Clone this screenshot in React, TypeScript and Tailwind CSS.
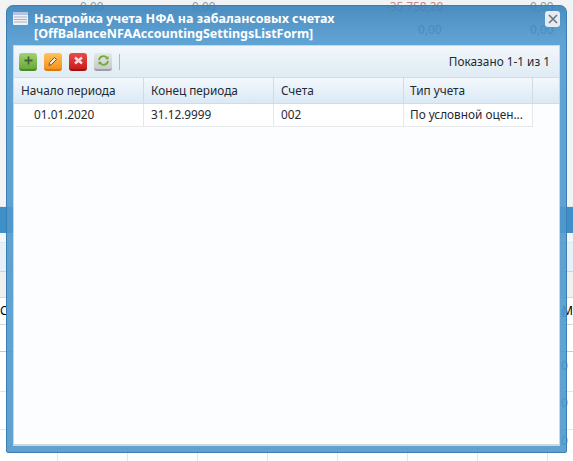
import React from "react";

const font = { fontFamily: '"Noto Sans", "Liberation Sans", sans-serif' };

function Btn({ from, to, edge, children }: { from: string; to: string; edge: string; children: React.ReactNode }) {
  return (
    <div
      className="w-[18px] h-[18px] rounded-[3px] flex items-center justify-center border-b-2"
      style={{ background: `linear-gradient(${from}, ${to})`, borderBottomColor: edge }}
    >
      {children}
    </div>
  );
}

const cols = [
  { w: "w-[128px]", ph: "pl-[5px]", h: "Начало периода", v: "01.01.2020", pv: "pl-[18px]" },
  { w: "w-[130px]", ph: "pl-[7px]", h: "Конец периода", v: "31.12.9999", pv: "pl-[7px]" },
  { w: "w-[130px]", ph: "pl-[7px]", h: "Счета", v: "002", pv: "pl-[7px]" },
  { w: "w-[129px]", ph: "pl-[6px]", h: "Тип учета", v: "По условной оцен...", pv: "pl-[6px]" },
];

const bgRows = [
  { h: "h-[207px]", c: "bg-[#f1f3f5] border-[#e3e6e9]", t: "" },
  { h: "h-[26px]", c: "bg-[#3f8fc9] border-[#3f8fc9]", t: "" },
  { h: "h-[10px]", c: "bg-[#f4f7fa] border-[#dfe6ec]", t: "" },
  { h: "h-[29px]", c: "bg-[#e6f0f8] border-[#c9d3dc]", t: "" },
  { h: "h-[26px]", c: "bg-[#f0f0f1] border-[#d5d8db]", t: "" },
  { h: "h-[27px]", c: "bg-white border-[#d5d8db]", t: "C" },
  { h: "h-[27px]", c: "bg-white border-[#c8c8c8]", t: "" },
  { h: "h-[40px]", c: "bg-white border-[#e3e6e9]", t: "" },
  { h: "h-[38px]", c: "bg-white border-[#e3e6e9]", t: "" },
];

const ticks = ["w-[58px]", "w-[70px]", "w-[70px]", "w-[70px]", "w-[70px]", "w-[70px]", "w-[70px]", "w-[70px]"];

export default function App() {
  return (
    <div className="relative w-[573px] h-[461px] overflow-hidden bg-white text-[11.8px] text-[#1f2a33]" style={font}>
      <div className="flex flex-col">
        {bgRows.map((r, i) => (
          <div key={i} className={`${r.h} ${r.c} border-b flex justify-between items-center text-black`}>
            <span>{r.t}</span>
            <span>{r.t ? "М" : ""}</span>
          </div>
        ))}
        <div className="h-[31px] flex bg-white">
          {ticks.map((w, i) => (
            <div key={i} className={`${w} shrink-0 border-r border-[#e3e6e9]`} />
          ))}
        </div>
      </div>
      <div className="absolute left-[80px] top-[-2px] flex text-[#8f989f]">
        <span className="w-[112px]">0,00</span>
        <span className="w-[194px]">0,00</span>
        <span className="w-[144px] text-[#bd8a8a]">-35 758,20</span>
        <span>0,00</span>
      </div>
      <div className="absolute left-[418px] top-[21px] flex text-[#17588c]">
        <span className="w-[112px]">0,00</span>
        <span>0,00</span>
      </div>
      <div className="absolute left-[561px] top-[304px] flex flex-col text-[#17588c] leading-[16px]">
        <span>0</span>
        <span className="mt-[37px]">0</span>
        <span className="mt-[21px]">0</span>
        <span className="mt-[22px]">0</span>
      </div>
      {/* Window */}
      <div className="absolute left-[6px] top-[5px] w-[561px] h-[448px] rounded-t-[7px] rounded-b-[2px] bg-gradient-to-b from-[#3a82ba]/90 from-[0%] via-[#4f9ad0]/90 via-[8%] to-[#4f97cb]/90 border border-[#3a7fb3] px-[6px] pb-[6px] flex flex-col">
        <div className="h-[39px] flex items-start shrink-0 relative">
          <svg width="15" height="13" viewBox="0 0 15 13" className="mt-[6px] shrink-0">
            <rect x="0" y="0" width="15" height="13" rx="1" fill="#eef1f5" />
            <rect x="0" y="0" width="15" height="3" fill="#b4c2e4" />
            <path d="M1 5h13M1 7.5h13M1 10h13" stroke="#a9b1c0" strokeWidth="1" />
          </svg>
          <div className="ml-[6px] mt-[5px] text-[12.5px] leading-[15px] font-bold text-white whitespace-nowrap">
            <div>Настройка учета НФА на забалансовых счетах</div>
            <div>[OffBalanceNFAAccountingSettingsListForm]</div>
          </div>
          <div className="absolute right-[0px] top-[5px] w-[15px] h-[16px] rounded-[3px] bg-[#e6ecf1] flex items-center justify-center">
            <svg width="10" height="10" viewBox="0 0 10 10">
              <path d="M1 1l8 8M9 1l-8 8" stroke="#6a757f" strokeWidth="1.6" />
            </svg>
          </div>
        </div>
        <div className="flex-1 flex flex-col bg-[#fbfdff] border border-[#cfd6dc] border-b-2 min-h-0">
          <div className="h-[32px] shrink-0 flex items-center pl-[5px] pr-[9px] bg-gradient-to-b from-[#f2f7fb] to-[#dfebf4] border-b border-[#cfdce6]">
            <div className="flex items-center gap-[7px]">
              <Btn from="#a2d36c" to="#6aa83c" edge="#4c8a28">
                <svg width="11" height="11" viewBox="0 0 11 11"><path d="M5.5 1.5v8M1.5 5.5h8" stroke="#44603a" strokeWidth="1.8" /></svg>
              </Btn>
              <Btn from="#ffc35c" to="#f49320" edge="#d67a10">
                <svg width="12" height="12" viewBox="0 0 12 12"><path d="M2 10.5l.6-3L7.5 2.5l2 2-5 5z" fill="#f5e9d6" stroke="#6b5640" strokeWidth="1" /></svg>
              </Btn>
              <Btn from="#ee4a4a" to="#c81c1c" edge="#a01212">
                <svg width="11" height="11" viewBox="0 0 11 11"><path d="M2 2.5l7 6M9 2.5l-7 6" stroke="#f7dede" strokeWidth="2.4" /></svg>
              </Btn>
              <Btn from="#e6e8e6" to="#c6cac8" edge="#9a9ea6">
                <svg width="13" height="13" viewBox="0 0 13 13" fill="none">
                  <path d="M2 6a4.5 4.5 0 0 1 8-2" stroke="#6aad3a" strokeWidth="1.8" />
                  <path d="M11 7a4.5 4.5 0 0 1-8 2" stroke="#6aad3a" strokeWidth="1.8" />
                  <path d="M8 5l3.5.5L11.5 2zM5 8l-3.5-.5L1.5 11z" fill="#6aad3a" />
                </svg>
              </Btn>
              <div className="w-px h-[16px] bg-[#a9bac7]" />
            </div>
            <div className="ml-auto text-[#1f2a33]">Показано 1-1 из 1</div>
          </div>
          <div className="flex h-[26px] shrink-0 bg-gradient-to-b from-[#f3f8fc] to-[#dbe9f4] border-b border-[#cfdce6]">
            <div className="w-[2px] shrink-0" />
            {cols.map((c) => (
              <div key={c.h} className={`${c.w} ${c.ph} shrink-0 flex items-center border-r border-[#cfdce6]`}>
                {c.h}
              </div>
            ))}
          </div>
          <div className="flex h-[23px] shrink-0">
            <div className="w-[2px] shrink-0" />
            {cols.map((c) => (
              <div key={c.v} className={`${c.w} ${c.pv} shrink-0 flex items-center border-r border-b border-[#e3e8ec] bg-white whitespace-nowrap`}>
                {c.v}
              </div>
            ))}
          </div>
        </div>
      </div>
    </div>
  );
}
